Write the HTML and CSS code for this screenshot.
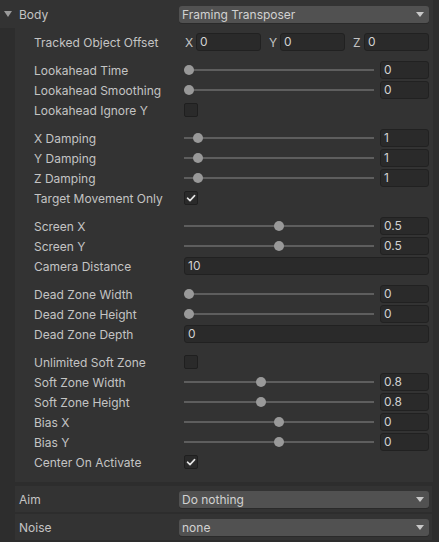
FILE: index.html
```html
<!DOCTYPE html>
<html>
<head>
<meta charset="utf-8">
<link rel="stylesheet" href="styles.css">
</head>
<body>
<div class="inspector">
  <div class="header">
    <span class="foldout"></span>
    <span class="header-label">Body</span>
    <div class="dropdown"><span>Framing Transposer</span><span class="arrow"></span></div>
  </div>

  <div class="panel">
    <div class="group">
      <div class="row">
        <div class="label">Tracked Object Offset</div>
        <div class="vec3">
          <div class="axis"><span class="axis-label">X</span><div class="field">0</div></div>
          <div class="axis"><span class="axis-label">Y</span><div class="field">0</div></div>
          <div class="axis"><span class="axis-label">Z</span><div class="field">0</div></div>
        </div>
      </div>
    </div>

    <div class="group">
      <div class="row"><div class="label">Lookahead Time</div>
        <div class="slider"><div class="track"><span class="thumb" style="--f:0"></span></div><div class="field num">0</div></div></div>
      <div class="row"><div class="label">Lookahead Smoothing</div>
        <div class="slider"><div class="track"><span class="thumb" style="--f:0"></span></div><div class="field num">0</div></div></div>
      <div class="row"><div class="label">Lookahead Ignore Y</div>
        <div class="control"><span class="checkbox"></span></div></div>
    </div>

    <div class="group">
      <div class="row"><div class="label">X Damping</div>
        <div class="slider"><div class="track"><span class="thumb" style="--f:0.05"></span></div><div class="field num">1</div></div></div>
      <div class="row"><div class="label">Y Damping</div>
        <div class="slider"><div class="track"><span class="thumb" style="--f:0.05"></span></div><div class="field num">1</div></div></div>
      <div class="row"><div class="label">Z Damping</div>
        <div class="slider"><div class="track"><span class="thumb" style="--f:0.05"></span></div><div class="field num">1</div></div></div>
      <div class="row"><div class="label">Target Movement Only</div>
        <div class="control"><span class="checkbox"><svg viewBox="0 0 14 14" width="14" height="14"><path d="M3.5 7.2 L6 9.6 L10.6 4.6" fill="none" stroke="#e4e4e4" stroke-width="1.6" stroke-linecap="round" stroke-linejoin="round"/></svg></span></div></div>
    </div>

    <div class="group">
      <div class="row"><div class="label">Screen X</div>
        <div class="slider"><div class="track"><span class="thumb" style="--f:0.5"></span></div><div class="field num">0.5</div></div></div>
      <div class="row"><div class="label">Screen Y</div>
        <div class="slider"><div class="track"><span class="thumb" style="--f:0.5"></span></div><div class="field num">0.5</div></div></div>
      <div class="row"><div class="label">Camera Distance</div>
        <div class="control"><div class="field wide">10</div></div></div>
    </div>

    <div class="group">
      <div class="row"><div class="label">Dead Zone Width</div>
        <div class="slider"><div class="track"><span class="thumb" style="--f:0"></span></div><div class="field num">0</div></div></div>
      <div class="row"><div class="label">Dead Zone Height</div>
        <div class="slider"><div class="track"><span class="thumb" style="--f:0"></span></div><div class="field num">0</div></div></div>
      <div class="row"><div class="label">Dead Zone Depth</div>
        <div class="control"><div class="field wide">0</div></div></div>
    </div>

    <div class="group">
      <div class="row"><div class="label">Unlimited Soft Zone</div>
        <div class="control"><span class="checkbox"></span></div></div>
      <div class="row"><div class="label">Soft Zone Width</div>
        <div class="slider"><div class="track"><span class="thumb" style="--f:0.4"></span></div><div class="field num">0.8</div></div></div>
      <div class="row"><div class="label">Soft Zone Height</div>
        <div class="slider"><div class="track"><span class="thumb" style="--f:0.4"></span></div><div class="field num">0.8</div></div></div>
      <div class="row"><div class="label">Bias X</div>
        <div class="slider"><div class="track"><span class="thumb" style="--f:0.5"></span></div><div class="field num">0</div></div></div>
      <div class="row"><div class="label">Bias Y</div>
        <div class="slider"><div class="track"><span class="thumb" style="--f:0.5"></span></div><div class="field num">0</div></div></div>
      <div class="row"><div class="label">Center On Activate</div>
        <div class="control"><span class="checkbox"><svg viewBox="0 0 14 14" width="14" height="14"><path d="M3.5 7.2 L6 9.6 L10.6 4.6" fill="none" stroke="#e4e4e4" stroke-width="1.6" stroke-linecap="round" stroke-linejoin="round"/></svg></span></div></div>
    </div>
  </div>

  <div class="stage-row">
    <span class="stage-label">Aim</span>
    <div class="dropdown"><span>Do nothing</span><span class="arrow"></span></div>
  </div>
  <div class="stage-row">
    <span class="stage-label">Noise</span>
    <div class="dropdown"><span>none</span><span class="arrow"></span></div>
  </div>
</div>
</body>
</html>
```

FILE: styles.css
```css
* { box-sizing: border-box; }

html, body {
  margin: 0;
  padding: 0;
  background: #2d2d2d;
}

body {
  font-family: Inter, "Noto Sans", sans-serif;
  font-size: 12px;
  color: #c4c4c4;
}

.inspector {
  width: 439px;
  height: 542px;
  overflow: hidden;
}

.header {
  height: 28px;
  display: flex;
  align-items: center;
  background: #333333;
  margin-right: 6px;
}

.foldout {
  width: 0;
  height: 0;
  margin-left: 4px;
  border-left: 4px solid transparent;
  border-right: 4px solid transparent;
  border-top: 6px solid #9a9a9a;
}

.header-label {
  margin-left: 7px;
  flex: 1;
}

.dropdown {
  width: 250px;
  height: 17px;
  margin-right: 4px;
  background: #515151;
  border-radius: 3px;
  display: flex;
  align-items: center;
  justify-content: space-between;
  padding: 0 5px 0 3px;
  color: #d2d2d2;
  line-height: 17px;
  box-shadow: 0 1px 0 #2a2a2a;
}

.arrow {
  width: 0;
  height: 0;
  border-left: 4px solid transparent;
  border-right: 4px solid transparent;
  border-top: 5px solid #c8c8c8;
}

.panel {
  margin: 0 6px 0 15px;
  background: #333333;
  padding: 4px 4px 10px 19px;
}

.group + .group {
  margin-top: 8px;
}

.row {
  height: 20px;
  display: flex;
  align-items: center;
}

.label {
  width: 150px;
  flex: none;
  white-space: nowrap;
}

.control {
  flex: 1;
  display: flex;
  align-items: center;
}

.field {
  height: 18px;
  background: #2a2a2a;
  border: 1px solid #212121;
  border-radius: 3px;
  padding-left: 3px;
  line-height: 16px;
  color: #d2d2d2;
}

.field.wide { flex: 1; }

.vec3 {
  flex: 1;
  display: grid;
  grid-template-columns: 1fr 1fr 1fr;
  column-gap: 7px;
}

.axis {
  display: flex;
  align-items: center;
}

.axis-label {
  width: 12px;
  padding-left: 1px;
  flex: none;
}

.axis .field { flex: 1; }

.slider {
  flex: 1;
  display: flex;
  align-items: center;
  gap: 6px;
}

.track {
  flex: 1;
  height: 2px;
  background: #5e5e5e;
  position: relative;
}

.thumb {
  position: absolute;
  top: -4px;
  left: calc((100% - 10px) * var(--f));
  width: 10px;
  height: 10px;
  border-radius: 50%;
  background: #999999;
}

.field.num {
  width: 49px;
  flex: none;
}

.checkbox {
  width: 14px;
  height: 14px;
  background: #2a2a2a;
  border: 1px solid #1f1f1f;
  border-radius: 2px;
  display: flex;
  align-items: center;
  justify-content: center;
}

.checkbox svg {
  display: block;
  flex: none;
}

.stage-row {
  margin: 4px 7px 0 15px;
  height: 26px;
  background: #333333;
  display: flex;
  align-items: center;
  padding-right: 3px;
}

.stage-row + .stage-row {
  margin-top: 2px;
}

.stage-label {
  flex: 1;
  padding-left: 4px;
}

.stage-row .dropdown {
  margin-right: 0;
}
```
